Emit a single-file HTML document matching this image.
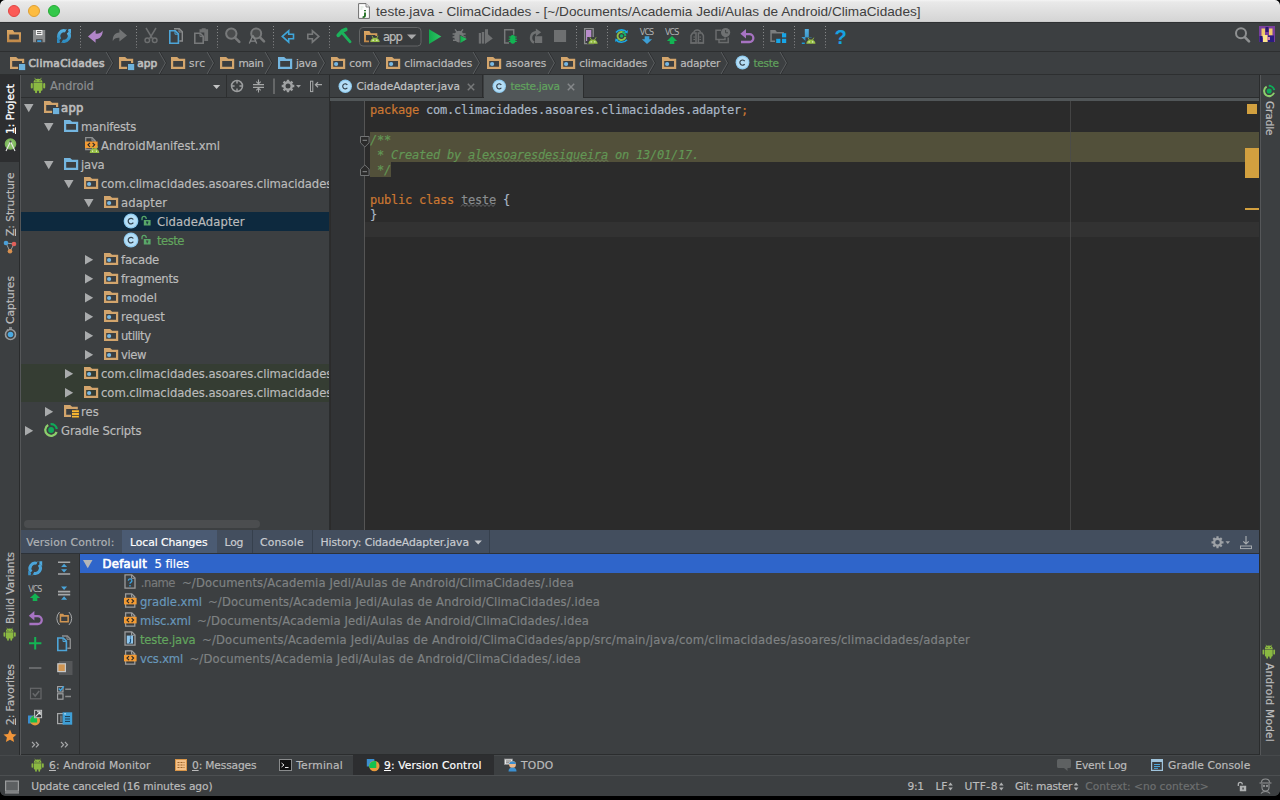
<!DOCTYPE html>
<html><head><meta charset="utf-8"><title>teste.java - ClimaCidades</title>
<style>
*{box-sizing:border-box;margin:0;padding:0}
html,body{width:1280px;height:800px;overflow:hidden;background:#000}
body{position:relative;font-family:"DejaVu Sans","Liberation Sans",sans-serif;font-size:11.6px;color:#bbb;-webkit-text-stroke:.18px}
.abs{position:absolute}
#win{position:absolute;left:0;top:0;width:1280px;height:796px;border-radius:5px 5px 6px 6px;background:#3c3f41;overflow:hidden}
#title{position:absolute;left:0;top:0;width:1280px;height:22px;background:linear-gradient(#f4f4f4 0,#e9e9e9 2px,#d5d5d5 21px,#c4c4c4 22px);border-radius:5px 5px 0 0}
#title .t{position:absolute;left:376px;top:3.800px;font-family:"Liberation Sans",sans-serif;font-size:13.600px;color:#404040;white-space:nowrap;letter-spacing:.02px;-webkit-text-stroke:0}
.tl{position:absolute;top:5px;width:12px;height:12px;border-radius:50%}
#toolbar{position:absolute;left:0;top:22px;width:1280px;height:30px;background:#3c3f41;border-bottom:1px solid #2d2f30;border-top:1px solid #2f3133}
#nav{position:absolute;left:0;top:52px;width:1280px;height:23px;background:#3c3f41;border-bottom:1px solid #2d2f30}
#lstrip{position:absolute;left:0;top:75px;width:21px;height:680px;background:#3c3f41}
#rstrip{position:absolute;left:1259px;top:75px;width:21px;height:680px;background:#3c3f41}
.vt{font-size:10.6px;line-height:15px;height:15px;transform-origin:0 0;transform:rotate(-90deg)}
.vtr{font-size:10.6px;line-height:15px;height:15px;transform-origin:0 0;transform:rotate(90deg)}
#proj{position:absolute;left:21px;top:75px;width:308px;height:455px;background:#3c3f41;overflow:hidden}
#projhead{position:absolute;left:0;top:0;width:308px;height:23px;border-bottom:1px solid #2d2f30}
.row{position:absolute;left:0;width:308px;height:19px;line-height:19px;white-space:nowrap}
.t{position:absolute;white-space:pre}
.row .t{line-height:19px}
#vdiv{position:absolute;left:329px;top:75px;width:1px;height:455px;background:#2b2d2e}
#editor{position:absolute;left:330px;top:75px;width:929px;height:455px;background:#2b2b2b;overflow:hidden}
#tabs{position:absolute;left:0;top:0;width:929px;height:23px;background:#3c3f41;border-bottom:1px solid #2b2d2e}
#tabline{position:absolute;left:0;top:23px;width:929px;height:3px;background:#515658}
#code{position:absolute;left:1px;top:26px;width:928px;height:429px;font-family:"DejaVu Sans Mono","Liberation Mono",monospace;font-size:12px;letter-spacing:-.224px;color:#a9b7c6}
.cl{position:absolute;left:38.900px;height:15px;line-height:15px;white-space:pre;margin-top:1.200px}
.kw{color:#cc7832}.dc{color:#629755;font-style:italic}
.wv{text-decoration:underline wavy #6a8759;text-decoration-thickness:1px;text-underline-offset:2px}
.un{color:#8a8d90}
#bottom{position:absolute;left:21px;top:530px;width:1238px;height:225px;background:#3c3f41}
#bhead{position:absolute;left:0;top:0;width:1238px;height:23px;background:#434e5e}
.bh{top:1.500px;line-height:22px;font-size:10.800px}
.br{line-height:19px}
.tw{top:0;line-height:20px;font-size:10.700px}
.st{top:1px;line-height:20px;font-size:10.700px}
#twbar{position:absolute;left:0;top:755px;width:1280px;height:20px;background:#3c3f41;border-top:1px solid #46494b}
#status{position:absolute;left:0;top:775px;width:1280px;height:21px;background:#3c3f41;border-top:1px solid #4c4f51;border-radius:0 0 5px 5px}
</style></head><body>
<svg width="0" height="0" style="position:absolute">
<defs>
<symbol id="i-folder" viewBox="0 0 16 16"><path fill-rule="evenodd" d="M0 2h6.100l2 1.750h6.100v10.350h-14.200z M2.200 6.100v5.650h9.800v-5.650z"/></symbol>
<symbol id="i-pkg" viewBox="0 0 16 16"><path fill="#d3a56c" fill-rule="evenodd" d="M0 2h6.100l2 1.750h6.100v10.350h-14.200z M2.200 6.100v5.650h9.800v-5.650z"/><circle cx="5.100" cy="9" r="2.100" fill="#78b8e2"/></symbol>
<symbol id="i-mod" viewBox="0 0 16 16"><path fill="#d3a56c" fill-rule="evenodd" d="M0 2h6.100l2 1.750h6.100v4.300h-2.200v-1.950h-9.800v5.650h5.900v2.350h-8.100z"/><rect x="9" y="9" width="6.200" height="6.100" fill="#6eb2dc"/></symbol>
<symbol id="i-res" viewBox="0 0 16 16"><path fill="#d3a56c" fill-rule="evenodd" d="M0 2h6.100l2 1.750h5.700v2.600h-2v-.250h-9.600v5.650h4.900v2.350h-7.100z"/><path fill="#f2a81d" d="M8 7.300h7v1.900h-7zM8 10h7v1.900h-7zM8 12.700h7v1.900h-7z"/><path stroke="#ffe27a" stroke-width=".7" stroke-dasharray="1.200 .9" d="M8.300 8.250h6.500M8.300 10.950h6.500M8.300 13.650h6.500"/></symbol>
<symbol id="i-class" viewBox="0 0 16 16"><circle cx="8" cy="8" r="7.400" fill="#8fcbef"/><circle cx="8" cy="8" r="6.200" fill="#b5def6"/><path d="M10.300 6.500a2.800 2.800 0 1 0 0 3.200" fill="none" stroke="#33424e" stroke-width="1.250"/></symbol>
<symbol id="i-lock" viewBox="0 0 16 16"><path d="M2 6.300v-1.800a2.100 2.100 0 0 1 4.200 0v.6" fill="none" stroke="#59a869" stroke-width="1.300"/><path fill="#59a869" fill-rule="evenodd" d="M3.800 6h6.800v5.600h-6.800z M6 7.500h2.400v1h-.7v1.800h-1v-1.800h-.7z"/></symbol>
<symbol id="i-arrd" viewBox="0 0 10 9"><path d="M0 0h9.5l-4.75 8.2z" fill="#a9abac"/></symbol>
<symbol id="i-arrr" viewBox="0 0 9 10"><path d="M0 0v9.5l8.2-4.75z" fill="#a9abac"/></symbol>
<symbol id="i-droid" viewBox="0 0 16 16" preserveAspectRatio="none"><g fill="#8bb942"><path d="M4 5.8h8v6.4a.8.8 0 0 1-.8.8h-6.4a.8.8 0 0 1-.8-.8z"/><path d="M4 5.2a4 3.6 0 0 1 8 0z"/><rect x="1.6" y="5.8" width="1.8" height="5.2" rx=".9"/><rect x="12.6" y="5.8" width="1.8" height="5.2" rx=".9"/><rect x="5.4" y="12" width="1.8" height="3.4" rx=".9"/><rect x="8.8" y="12" width="1.8" height="3.4" rx=".9"/><path d="M5 .8l1 1.6M11 .8l-1 1.6" stroke="#8bb942" stroke-width=".7"/></g><circle cx="6.2" cy="3.6" r=".55" fill="#3c3f41"/><circle cx="9.8" cy="3.6" r=".55" fill="#3c3f41"/></symbol>
<symbol id="i-droidhead" viewBox="0 0 12 8"><path d="M.7 7.700a5.300 4.900 0 0 1 10.600 0z" fill="#96bf45"/><path d="M2.700.700l1.500 2.600M9.300.700l-1.500 2.600" stroke="#96bf45" stroke-width="1" stroke-linecap="round"/><circle cx="3.900" cy="5.500" r=".7" fill="#fff"/><circle cx="8.100" cy="5.500" r=".7" fill="#fff"/></symbol>
<symbol id="i-xmlfile" viewBox="0 0 16 16"><path d="M1.7 1.7h6.5l3 3v8.8h-9.5z" fill="none" stroke="#8f9192" stroke-width="1.3"/><path d="M8 1.7v3.2h3.2" fill="none" stroke="#8f9192" stroke-width="1"/><rect x="1" y="5.5" width="12.6" height="6.6" fill="#f39b34"/><path d="M6 6.8l-2 2 2 2M8.6 6.8l2 2-2 2" fill="none" stroke="#2d2b28" stroke-width="1.2"/></symbol>
<symbol id="i-gradle" viewBox="0 0 16 16"><path d="M4.170 2.930A5.850 5.850 0 1 0 12.600 10" fill="none" stroke="#8ccf6c" stroke-width="2.300"/><path d="M6.590 2.170A5.850 5.850 0 0 1 12.860 6.980" fill="none" stroke="#0fa958" stroke-width="2.300"/><circle cx="7.100" cy="8" r="2.900" fill="#0fa958"/></symbol>
<symbol id="i-qfile" viewBox="0 0 12 15"><path d="M1 .8h6.800l3.200 3.200v10.200h-10z" fill="#3c3f41" stroke="#9a9c9d" stroke-width="1.300"/><path d="M7.500 1v3.300h3.300" fill="none" stroke="#9a9c9d" stroke-width="1"/><path d="M4.300 6.600a1.800 1.800 0 1 1 2.600 1.700c-.7.400-.9.800-.9 1.500M6 11v1.400" fill="none" stroke="#3ba3e0" stroke-width="1.300"/></symbol>
<symbol id="i-jfile" viewBox="0 0 12 15"><path d="M1 .8h6.800l3.200 3.200v10.200h-10z" fill="#3c3f41" stroke="#9a9c9d" stroke-width="1.300"/><path d="M7.500 1v3.300h3.300" fill="none" stroke="#9a9c9d" stroke-width="1"/><rect x="2.800" y="4.600" width="6.200" height="8" fill="#8fc7ee"/><path d="M6.500 5.600v1M6.500 7.600v3.200c0 .9-.5 1.200-1.500 1.200" fill="none" stroke="#1d4f7a" stroke-width="1.200"/></symbol>
<symbol id="i-xmlfile2" viewBox="0 0 13 15"><path d="M1.600.8h6.200l3 3v10.400h-9.200z" fill="none" stroke="#9a9c9d" stroke-width="1.300"/><path d="M7.500 1v3.200h3.200" fill="none" stroke="#9a9c9d" stroke-width="1"/><rect x="0" y="4.800" width="12.600" height="6.600" fill="#f39b34"/><path d="M5 6.100l-2 2 2 2M7.600 6.100l2 2-2 2" fill="none" stroke="#2d2b28" stroke-width="1.200"/></symbol>
</defs></svg>

<div id="win">
<div id="title">
 <div class="tl" style="left:8px;background:#fc5b57;border:.5px solid #df4744"></div>
 <div class="tl" style="left:28px;background:#fdbc40;border:.5px solid #de9f34"></div>
 <div class="tl" style="left:48px;background:#34c84a;border:.5px solid #27aa35"></div>
 <svg class="abs" style="left:358px;top:3px" width="12" height="16" viewBox="0 0 12 16"><path d="M.6.600h7.400l3.400 3.400v11.400h-10.800z" fill="#fdfdfd" stroke="#6e6e6e" stroke-width="1"/><path d="M8 .6v3.400h3.400" fill="#e4e4e4" stroke="#6e6e6e" stroke-width=".8"/><path d="M2.500 4h3M2.500 6h2" stroke="#c9d9c9" stroke-width=".8"/><path d="M7 7v1.300M7 9.400v3.200c0 1.100-.8 1.600-2.400 1.500" fill="none" stroke="#1a6a1a" stroke-width="1.800"/></svg>
 <div class="t">teste.java - ClimaCidades - [~/Documents/Academia Jedi/Aulas de Android/ClimaCidades]</div>
</div>
<div id="toolbar"><svg class="abs" style="left:0;top:-1px" width="1280" height="29" viewBox="0 22 1280 29" font-family="'DejaVu Sans',sans-serif">
<defs>
<linearGradient id="gOr" x1="0" y1="0" x2="0" y2="1"><stop offset="0" stop-color="#dba764"/><stop offset="1" stop-color="#c08848"/></linearGradient>
<linearGradient id="gBl" x1="0" y1="0" x2="0" y2="1"><stop offset="0" stop-color="#55b0e0"/><stop offset="1" stop-color="#2e8cc0"/></linearGradient>
<linearGradient id="gGr" x1="0" y1="0" x2="1" y2="0"><stop offset="0" stop-color="#13a84c"/><stop offset="1" stop-color="#2ec866"/></linearGradient>
<g id="sep"><path d="M0.5 26v22" stroke="#8e8f90" stroke-width="1" stroke-dasharray="1 2.05"/></g>
</defs>
<use href="#sep" x="80"/><use href="#sep" x="136"/><use href="#sep" x="217"/><use href="#sep" x="273"/><use href="#sep" x="329"/><use href="#sep" x="576"/><use href="#sep" x="607"/><use href="#sep" x="763"/><use href="#sep" x="794"/><use href="#sep" x="825"/>
<path fill="url(#gOr)" fill-rule="evenodd" d="M7 30h5.8l1.6 2.3h6.6v9.9h-14z M9.3 34.4v5.2h9.6v-5.2z"/>
<path fill="#8a8c8d" d="M33 30h12.2v12.2h-12.2z"/><rect x="36" y="30" width="6.4" height="5.1" fill="#fafafa"/><path d="M37 31.6h4.4M37 33.4h4.4" stroke="#444" stroke-width=".9"/><rect x="36.1" y="39.3" width="6.4" height="2.9" fill="#3c3f41"/><rect x="37.2" y="40.2" width="4.1" height="1.8" fill="#3f9edb"/>
<g fill="none" stroke="url(#gBl)" stroke-width="3.1"><path d="M65.81 31.02A5.3 5.3 0 0 0 60.06 39.55"/><path d="M62.19 40.98A5.3 5.3 0 0 0 67.94 32.45"/></g>
<path fill="#4fabde" d="M71 29h-5l5 5z"/><path fill="#2f8abf" d="M57 43h5l-5-5z"/>
<path d="M68 29.200l-8 13.600" stroke="#3c3f41" stroke-width="1.500"/>
<path fill="#b185c8" d="M88 36.4l7.6-6.4v3.6c3 .2 5.600-.4 7-3.200 .4 4.600-2.400 8.600-7 8.800v3.600z"/>
<path fill="#717374" d="M127 35.400l-7.600-6.400v3.600c-4.600 .2-7 3.600-6.600 8.600 1.400-3 3.600-3.600 6.600-3.400v3.800z"/>
<g fill="none" stroke="#6c6e6f" stroke-width="1.500"><path d="M146 28l6.400 10.500M156 28l-6.400 10.500"/><circle cx="147.300" cy="40.300" r="2.300"/><circle cx="154.700" cy="40.300" r="2.300"/></g>
<path d="M174 28.700h5.300l3 3v9.300h-3" fill="none" stroke="#8a8c8d" stroke-width="1.400"/><path d="M179 28.700v3.300h3.300" fill="none" stroke="#8a8c8d" stroke-width="1"/>
<path d="M169.800 30.700h5.400l3.200 3.200v9.300h-8.600z" fill="#3c3f41" stroke="#4da5d8" stroke-width="1.600"/><path d="M175 30.700v3.500h3.400" fill="none" stroke="#4da5d8" stroke-width="1"/>
<path fill="#6f7172" d="M199.500 29.300h2.200v-1.100h4v1.100h2.400v11.600h-3.800v-8.400h-4.800z"/>
<path d="M194.800 33.300h5.400l3 3v6.900h-8.400z" fill="#3c3f41" stroke="#77797a" stroke-width="1.600"/><path d="M200 33.300v3.300h3.200" fill="none" stroke="#77797a" stroke-width="1"/>
<circle cx="231.300" cy="33.600" r="5.200" fill="#4a4c4d" stroke="#77797a" stroke-width="2"/><path d="M235 37.600l4.300 4.300" stroke="#77797a" stroke-width="2.600" stroke-linecap="round"/>
<circle cx="256.200" cy="33.400" r="5" fill="#4a4c4d" stroke="#77797a" stroke-width="2"/><path d="M260 37.300l4 4" stroke="#77797a" stroke-width="2.600" stroke-linecap="round"/>
<path d="M249.300 43.600l3.300-7.800h.8l3.300 7.800M250.700 41.200h4.600" fill="none" stroke="#838586" stroke-width="1.300"/>
<path d="M282.300 36.400l6.400-5.600v3.400h4.800v4.500h-4.800v3.400z" fill="none" stroke="#3fa6da" stroke-width="1.600"/>
<path d="M318.800 36.400l-6.400-5.600v3.400h-4.600v4.500h4.600v3.400z" fill="none" stroke="#77797a" stroke-width="1.600"/>
<path d="M338.300 35.300l4-4.300 3.400-1.500" fill="none" stroke="#1cb25b" stroke-width="3.800" stroke-linecap="round" stroke-linejoin="round"/><path d="M342.500 33l7.600 8.800" stroke="#1cb25b" stroke-width="2.800" stroke-linecap="round"/>
<rect x="359.500" y="27.500" width="61.500" height="18.500" rx="3.500" fill="#383b3d" stroke="#636566"/>
<path fill="url(#gOr)" fill-rule="evenodd" d="M364 31h5.300l1.600 2.200h6.400v9h-13.300z M366 35v5.400h9.400v-5.400z"/>
<rect x="369" y="36" width="9" height="7" fill="#383b3d"/>
<svg x="369.400" y="35.300" width="11.200" height="7.200"><use href="#i-droidhead"/></svg>
<text x="383" y="41.400" font-size="11.600" fill="#bbbbbb" textLength="19.800" stroke="#bbbbbb" stroke-width=".2">app</text>
<path d="M407 34.400h9.400l-4.700 4.800z" fill="#a7a8a9"/>
<path d="M429 29.200l12.300 7.300-12.300 7.500z" fill="url(#gGr)"/>
<g fill="#77797a"><ellipse cx="459" cy="36.600" rx="4.800" ry="5.800"/><path d="M455.500 29l2 2.600h3l2-2.600 1 .7-1.800 2.600h-5.400l-1.800-2.600z"/><path d="M452.600 33.300h13v1.500h-13zM452.600 36.300h13v1.500h-13zM453 39.600h12v1.500h-12z"/></g>
<path d="M459.600 34.400l7.700 4.600-7.700 4.900z" fill="#3c3f41"/><path d="M460.300 35.400l6.500 3.700-6.500 4z" fill="url(#gGr)"/>
<g fill="#6f7172"><rect x="478.800" y="33" width="2.200" height="10.600"/><rect x="481.800" y="32" width="2.400" height="11.600"/><path d="M485 29.200h3v5l4.800 4.400-7.800 5.300z"/></g>
<path d="M509 43h-4.300v-13.300h9v5" fill="none" stroke="#77797a" stroke-width="1.500"/>
<g fill="#13b453"><ellipse cx="512.800" cy="39.400" rx="2.700" ry="4.400"/><path d="M508.800 36.400h8v1.100h-8zM508.600 38.700h8.400v1.100h-8.400zM508.800 41h8v1.100h-8z"/></g>
<path d="M534 42.600a5.500 5.500 0 0 1 1.600-10.300h1" fill="none" stroke="#6f7172" stroke-width="2.400"/><path d="M535.800 28.400l5.400 3.900-5.400 4z" fill="#6f7172"/><rect x="535" y="36.200" width="7.200" height="6.800" fill="#6f7172"/>
<rect x="554" y="30" width="12.100" height="12" fill="#6e7071"/>
<path d="M584.600 28.600h8.600v15h-8.600z" fill="#3c3f41" stroke="#8a8c8d" stroke-width="1.300"/><rect x="586" y="30" width="5.300" height="11" fill="#b98dcc"/>
<rect x="587.200" y="37" width="11.500" height="7" fill="#3c3f41"/><svg x="587.600" y="37" width="10.800" height="7"><use href="#i-droidhead"/></svg>
<g fill="none" stroke-width="1.600"><path d="M616 32.400a7.400 7.400 0 0 1 11-.2" stroke="#1aa7e6"/><path d="M627 39.700a7.400 7.400 0 0 1-11 .2" stroke="#1aa7e6"/><path d="M624.600 33.400a4 4 0 1 0 .8 3.600" stroke="#8cc04a" stroke-width="1.900"/><path d="M622.400 32.200a4 4 0 0 1 3 4" stroke="#13ae6a" stroke-width="1.900"/></g><circle cx="621.600" cy="36" r="1.700" fill="#13ae6a"/>
<path fill="#1aa7e6" d="M627.800 30l-.2 3.400-3-1zM615.200 42l.2-3.400 3 1z"/>
<text x="639.800" y="35" font-size="8" fill="#b4b6b7" textLength="14.400">VCS</text>
<path d="M644.700 36.300h4.600v3h2.800l-5.100 4.800-5.100-4.800h2.800z" fill="#3d9fd6"/>
<text x="665" y="35" font-size="8" fill="#b4b6b7" textLength="14.400">VCS</text>
<path d="M669.700 44h4.600v-3h2.800l-5.100-4.900-5.100 4.900h2.800z" fill="#13b453"/>
<g fill="none" stroke="#6a6c6d" stroke-width="1.500"><path d="M691 43v-7.500l1.600-2.500h3.400v10zM703.400 43v-7.500l-1.600-2.500h-3.400v10z"/><path d="M693.600 32.600a3.800 3.800 0 0 1 7.200 0" stroke-width="1.300"/><path d="M693.400 37h1.600M693.400 39.500h1.600M699.400 37h1.600M699.400 39.500h1.600" stroke-width="1.200"/></g><path d="M690.400 42.300h13.600v1.200h-13.600z" fill="#6a6c6d"/>
<g fill="none" stroke="#6a6c6d" stroke-width="1.500"><path d="M721 30.200h-5v9.400h9v-2M719 39.800v2.800h9.200v-5"/></g><circle cx="725.600" cy="32.600" r="4.600" fill="#6f7172"/><path d="M725.600 30v2.800h2.400" fill="none" stroke="#3c3f41" stroke-width=".9"/>
<path d="M741 42h8.400a3.900 3.900 0 0 0 0-7.900h-4.400" fill="none" stroke="#a773c2" stroke-width="2.300"/><path d="M746 29l-5.600 4.800 5.600 4.700z" fill="#a773c2"/>
<path fill="#7b7d7e" fill-rule="evenodd" d="M770.300 30h5l1.600 2h7v2h-1.500v-.5h-10.600v7h3.200v1.500h-4.700z"/>
<g fill="#17a6e8"><rect x="782" y="33.200" width="4.200" height="4.200"/><rect x="776.200" y="38.800" width="4.200" height="4.200"/><rect x="782" y="38.800" width="4.200" height="4.200"/></g>
<path d="M804.800 29h4v8h3.400l-5.400 5.200-5.400-5.200h3.400z" fill="url(#gBl)"/><rect x="801.800" y="42.600" width="3" height="1.300" fill="#17a6e8"/>
<rect x="805.400" y="37.400" width="11" height="7" fill="#3c3f41"/><svg x="805.600" y="37.200" width="10.600" height="6.900"><use href="#i-droidhead"/></svg>
<text x="834.600" y="43.800" font-size="20" font-weight="bold" fill="#17a2e2" font-family="'Liberation Sans',sans-serif">?</text>
<circle cx="1241" cy="33.200" r="5" fill="none" stroke="#8f9192" stroke-width="2"/><path d="M1244.800 37.200l4.200 4.200" stroke="#8f9192" stroke-width="2.600" stroke-linecap="round"/>
<rect x="1259" y="26" width="16" height="16" fill="#7a3f9e"/><rect x="1261.500" y="28.500" width="3.500" height="9" fill="#f0c96a"/><rect x="1269" y="28.500" width="3.500" height="7" fill="#f0c96a"/><rect x="1265.500" y="27" width="3" height="5" fill="#2a1a6a"/><rect x="1263" y="35" width="4.500" height="7" fill="#fbe58a"/><rect x="1259.500" y="36" width="3" height="6" fill="#231878"/><rect x="1268" y="35.500" width="6" height="6.500" fill="#2b1d80"/><rect x="1267" y="37" width="3" height="3" fill="#d98aa0"/>
</svg>
</div>
<div id="nav"><svg class="abs" style="left:10px;top:3px" width="16" height="16" ><use href="#i-mod"/></svg><span class="t" style="left:28.4px;top:0px;font-size:10.6px;-webkit-text-stroke:.7px;line-height:22px;height:22px;letter-spacing:0.332px;">ClimaCidades</span><svg class="abs" style="left:105.0px;top:0" width="9" height="22"><path d="M2.100 0l6.300 11-6.300 11" fill="none" stroke="#2f3133" stroke-width="1"/><path d="M1.100 0l6.300 11-6.300 11" fill="none" stroke="#5a5d5f" stroke-width="1"/></svg><svg class="abs" style="left:119px;top:3px" width="16" height="16" ><use href="#i-mod"/></svg><span class="t" style="left:137.2px;top:0px;font-size:10.6px;-webkit-text-stroke:.7px;line-height:22px;height:22px;letter-spacing:0.049px;">app</span><svg class="abs" style="left:157.5px;top:0" width="9" height="22"><path d="M2.100 0l6.300 11-6.300 11" fill="none" stroke="#2f3133" stroke-width="1"/><path d="M1.100 0l6.300 11-6.300 11" fill="none" stroke="#5a5d5f" stroke-width="1"/></svg><svg class="abs" style="left:171px;top:3px" width="16" height="16" fill="#d3a56c"><use href="#i-folder"/></svg><span class="t" style="left:189px;top:0px;font-size:10.6px;line-height:22px;height:22px;letter-spacing:0.310px;">src</span><svg class="abs" style="left:205.6px;top:0" width="9" height="22"><path d="M2.100 0l6.300 11-6.300 11" fill="none" stroke="#2f3133" stroke-width="1"/><path d="M1.100 0l6.300 11-6.300 11" fill="none" stroke="#5a5d5f" stroke-width="1"/></svg><svg class="abs" style="left:220px;top:3px" width="16" height="16" fill="#d3a56c"><use href="#i-folder"/></svg><span class="t" style="left:238.4px;top:0px;font-size:10.6px;line-height:22px;height:22px;letter-spacing:-0.396px;">main</span><svg class="abs" style="left:263.5px;top:0" width="9" height="22"><path d="M2.100 0l6.300 11-6.300 11" fill="none" stroke="#2f3133" stroke-width="1"/><path d="M1.100 0l6.300 11-6.300 11" fill="none" stroke="#5a5d5f" stroke-width="1"/></svg><svg class="abs" style="left:278px;top:3px" width="16" height="16" fill="#74b6e0"><use href="#i-folder"/></svg><span class="t" style="left:296px;top:0px;font-size:10.6px;line-height:22px;height:22px;letter-spacing:-0.326px;">java</span><svg class="abs" style="left:317.1px;top:0" width="9" height="22"><path d="M2.100 0l6.300 11-6.300 11" fill="none" stroke="#2f3133" stroke-width="1"/><path d="M1.100 0l6.300 11-6.300 11" fill="none" stroke="#5a5d5f" stroke-width="1"/></svg><svg class="abs" style="left:331.2px;top:3px" width="16" height="16" ><use href="#i-pkg"/></svg><span class="t" style="left:349.2px;top:0px;font-size:10.6px;line-height:22px;height:22px;letter-spacing:0.020px;">com</span><svg class="abs" style="left:372.1px;top:0" width="9" height="22"><path d="M2.100 0l6.300 11-6.300 11" fill="none" stroke="#2f3133" stroke-width="1"/><path d="M1.100 0l6.300 11-6.300 11" fill="none" stroke="#5a5d5f" stroke-width="1"/></svg><svg class="abs" style="left:386.2px;top:3px" width="16" height="16" ><use href="#i-pkg"/></svg><span class="t" style="left:404.2px;top:0px;font-size:10.6px;line-height:22px;height:22px;letter-spacing:-0.115px;">climacidades</span><svg class="abs" style="left:472.3px;top:0" width="9" height="22"><path d="M2.100 0l6.300 11-6.300 11" fill="none" stroke="#2f3133" stroke-width="1"/><path d="M1.100 0l6.300 11-6.300 11" fill="none" stroke="#5a5d5f" stroke-width="1"/></svg><svg class="abs" style="left:487px;top:3px" width="16" height="16" ><use href="#i-pkg"/></svg><span class="t" style="left:505.4px;top:0px;font-size:10.6px;line-height:22px;height:22px;letter-spacing:-0.037px;">asoares</span><svg class="abs" style="left:546.5px;top:0" width="9" height="22"><path d="M2.100 0l6.300 11-6.300 11" fill="none" stroke="#2f3133" stroke-width="1"/><path d="M1.100 0l6.300 11-6.300 11" fill="none" stroke="#5a5d5f" stroke-width="1"/></svg><svg class="abs" style="left:561px;top:3px" width="16" height="16" ><use href="#i-pkg"/></svg><span class="t" style="left:579.3px;top:0px;font-size:10.6px;line-height:22px;height:22px;letter-spacing:-0.115px;">climacidades</span><svg class="abs" style="left:647.4px;top:0" width="9" height="22"><path d="M2.100 0l6.300 11-6.300 11" fill="none" stroke="#2f3133" stroke-width="1"/><path d="M1.100 0l6.300 11-6.300 11" fill="none" stroke="#5a5d5f" stroke-width="1"/></svg><svg class="abs" style="left:662.1px;top:3px" width="16" height="16" ><use href="#i-pkg"/></svg><span class="t" style="left:680.2px;top:0px;font-size:10.6px;line-height:22px;height:22px;letter-spacing:-0.210px;">adapter</span><svg class="abs" style="left:720.4px;top:0" width="9" height="22"><path d="M2.100 0l6.300 11-6.300 11" fill="none" stroke="#2f3133" stroke-width="1"/><path d="M1.100 0l6.300 11-6.300 11" fill="none" stroke="#5a5d5f" stroke-width="1"/></svg><svg class="abs" style="left:734.6px;top:3px" width="15" height="15" ><use href="#i-class"/></svg><span class="t" style="left:753.4px;top:0px;font-size:10.6px;color:#62a55e;line-height:22px;height:22px;letter-spacing:-0.315px;">teste</span><svg class="abs" style="left:778.9px;top:0" width="9" height="22"><path d="M2.100 0l6.300 11-6.300 11" fill="none" stroke="#2f3133" stroke-width="1"/><path d="M1.100 0l6.300 11-6.300 11" fill="none" stroke="#5a5d5f" stroke-width="1"/></svg></div>
<div id="lstrip"><div class="abs" style="left:0;top:0;width:19px;height:87px;background:#2d2e30"></div>
<div class="abs" style="left:19px;top:0;width:1px;height:680px;background:#292b2c"></div>
<div class="abs" style="left:20px;top:0;width:1px;height:680px;background:#555759"></div>
<span class="t vt" style="left:3px;top:59px;color:#fff;-webkit-text-stroke:.3px;letter-spacing:0.008px"><u>1</u>: Project</span>
<svg class="abs" style="left:4px;top:62.500px" width="13" height="14" viewBox="0 0 13 14"><circle cx="6.500" cy="6" r="5.800" fill="#7cb85a"/><circle cx="6.500" cy="6" r="4" fill="#9acb7a" opacity=".5"/><path d="M6.500 3.500l-4.500 9.500M6.500 3.500l4.500 9.500" fill="none" stroke="#e8e8e8" stroke-width="1.100"/><circle cx="6.500" cy="3.600" r="1.100" fill="#4a4d4f"/></svg>
<span class="t vt" style="left:3px;top:161px;letter-spacing:0.001px;-webkit-text-stroke:.2px"><u>Z</u>: Structure</span>
<svg class="abs" style="left:3px;top:165px" width="14" height="14" viewBox="0 0 14 14"><path d="M3 3l8 1M3 3l4 8.500M11 4l-4 7.500" stroke="#9a9c9d" stroke-width="1"/><circle cx="3" cy="3" r="2.300" fill="#4a9fd8"/><circle cx="11" cy="4" r="2.300" fill="#e0605a"/><circle cx="7" cy="11.300" r="2.300" fill="#d89050"/></svg>
<span class="t vt" style="left:3px;top:249px;letter-spacing:0.043px;-webkit-text-stroke:.2px">Captures</span>
<svg class="abs" style="left:3.500px;top:251.500px" width="13" height="14" viewBox="0 0 13 14"><circle cx="6.500" cy="7.500" r="5" fill="none" stroke="#9a9c9d" stroke-width="1.600"/><circle cx="6.500" cy="7.500" r="2.800" fill="#4aa8e0"/><path d="M5 1h3M3 2.500l1.500 1.500" stroke="#9a9c9d" stroke-width="1.300"/></svg>
<span class="t vt" style="left:3px;top:549px;letter-spacing:-0.076px;-webkit-text-stroke:.2px">Build Variants</span>
<svg class="abs" style="left:2.400px;top:552.300px" width="15.250" height="14.250"><use href="#i-droid"/></svg>
<span class="t vt" style="left:3px;top:650px;letter-spacing:-0.044px;-webkit-text-stroke:.2px"><u>2</u>: Favorites</span>
<svg class="abs" style="left:3px;top:654px" width="14" height="14" viewBox="0 0 14 14"><path d="M7 .6l1.950 4.300 4.600.5-3.450 3.100 1 4.600-4.100-2.400-4.100 2.400 1-4.600-3.450-3.100 4.600-.5z" fill="#f0953a"/></svg>
</div>
<div id="rstrip"><div class="abs" style="left:0;top:0;width:1px;height:680px;background:#2a2c2d"></div><div class="abs" style="left:1px;top:0;width:1px;height:680px;background:#555759"></div>
<svg class="abs" style="left:3.500px;top:8.500px" width="14" height="14"><use href="#i-gradle"/></svg>
<span class="t vtr" style="left:17.800px;top:26px;letter-spacing:-0.125px;-webkit-text-stroke:.2px">Gradle</span>
<svg class="abs" style="left:1.900px;top:569.200px" width="15.600" height="15.300"><use href="#i-droid"/></svg>
<span class="t vtr" style="left:17.800px;top:587.500px;letter-spacing:0.220px;-webkit-text-stroke:.2px">Android Model</span>
</div>
<div id="proj"><div id="projhead"><svg class="abs" style="left:8.100px;top:1.900px" width="18" height="16.800"><use href="#i-droid"/></svg>
<span class="t" style="left:29px;top:0;line-height:22px;color:#8c8f91;-webkit-text-stroke:.15px;letter-spacing:-0.161px">Android</span>
<svg class="abs" style="left:0;top:0" width="308" height="22" viewBox="21 75 308 22">
<path d="M213 85h7.200l-3.600 3.900z" fill="#c3c4c4"/>
<path d="M226.500 75v22" stroke="#2d2f30"/>
<g fill="none" stroke="#9b9d9e" stroke-width="1.500"><circle cx="237" cy="86" r="5.500"/><path d="M237 80v3.600M237 88.400v3.600M231 86h3.600M239.400 86h3.600"/></g>
<g fill="none" stroke="#a6a8a9" stroke-width="1.100"><path d="M253 84.600h11M253 87.400h11M258.500 79.500v4M258.500 88.500v4"/><path d="M256.300 81.600l2.200 2.200 2.200-2.200M256.300 90.400l2.200-2.200 2.200 2.200"/></g>
<path d="M274 78.500v15.500" stroke="#77797a" stroke-width="1.400"/>
<g transform="translate(288 86)"><circle r="3.700" fill="none" stroke="#a0a2a3" stroke-width="2.400"/><g stroke="#a0a2a3" stroke-width="2.400"><path d="M0-6.300v2.400M0 6.300v-2.400M-6.300 0h2.400M6.300 0h-2.400M-4.450-4.450l1.700 1.700M4.450 4.450l-1.700-1.700M-4.450 4.450l1.700-1.700M4.450-4.450l-1.700 1.700"/></g></g>
<path d="M296 85h5l-2.500 2.800z" fill="#a0a2a3"/>
<rect x="310.500" y="81.200" width="2.300" height="10.400" fill="none" stroke="#a6a8a9" stroke-width="1"/><path d="M315.500 84.700h6.500M318 82.200l-2.600 2.500 2.600 2.500" fill="none" stroke="#a6a8a9" stroke-width="1.200"/>
</svg>
</div>
<div class="row" style="top:23px;"><svg class="abs" style="left:3px;top:6px" width="10" height="9" ><use href="#i-arrd"/></svg><svg class="abs" style="left:23px;top:1px" width="16" height="16" ><use href="#i-mod"/></svg><span class="t" style="left:40px;top:0.9px;-webkit-text-stroke:.7px;letter-spacing:0.324px;">app</span></div>
<div class="row" style="top:42px;"><svg class="abs" style="left:23px;top:6px" width="10" height="9" ><use href="#i-arrd"/></svg><svg class="abs" style="left:43px;top:1px" width="16" height="16" fill="#74b6e0"><use href="#i-folder"/></svg><span class="t" style="left:60px;top:0.9px;letter-spacing:-0.201px;">manifests</span></div>
<div class="row" style="top:61px;"><svg class="abs" style="left:63px;top:0.3px" width="16" height="16" ><use href="#i-xmlfile"/></svg><svg class="abs" style="left:67.5px;top:10.3px" width="11" height="7.3" ><use href="#i-droidhead"/></svg><span class="t" style="left:80px;top:0.9px;letter-spacing:-0.020px;">AndroidManifest.xml</span></div>
<div class="row" style="top:80px;"><svg class="abs" style="left:23px;top:6px" width="10" height="9" ><use href="#i-arrd"/></svg><svg class="abs" style="left:43px;top:1px" width="16" height="16" fill="#74b6e0"><use href="#i-folder"/></svg><span class="t" style="left:60px;top:0.9px;letter-spacing:-0.199px;">java</span></div>
<div class="row" style="top:99px;"><svg class="abs" style="left:43px;top:6px" width="10" height="9" ><use href="#i-arrd"/></svg><svg class="abs" style="left:63px;top:1px" width="16" height="16" ><use href="#i-pkg"/></svg><span class="t" style="left:80px;top:0.9px;letter-spacing:-0.032px;">com.climacidades.asoares.climacidades</span></div>
<div class="row" style="top:118px;"><svg class="abs" style="left:63px;top:6px" width="10" height="9" ><use href="#i-arrd"/></svg><svg class="abs" style="left:83px;top:1px" width="16" height="16" ><use href="#i-pkg"/></svg><span class="t" style="left:100px;top:0.9px;letter-spacing:0.089px;">adapter</span></div>
<div class="row" style="top:137px;background:#0d293e;"><svg class="abs" style="left:102px;top:1px" width="16" height="16" ><use href="#i-class"/></svg><svg class="abs" style="left:119px;top:2px" width="16" height="16" ><use href="#i-lock"/></svg><span class="t" style="left:136px;top:0.9px;letter-spacing:0.109px;">CidadeAdapter</span></div>
<div class="row" style="top:156px;"><svg class="abs" style="left:102px;top:1px" width="16" height="16" ><use href="#i-class"/></svg><svg class="abs" style="left:119px;top:2px" width="16" height="16" ><use href="#i-lock"/></svg><span class="t" style="left:136px;top:0.9px;color:#62a55e;letter-spacing:-0.481px;">teste</span></div>
<div class="row" style="top:175px;"><svg class="abs" style="left:64px;top:5px" width="9" height="10" ><use href="#i-arrr"/></svg><svg class="abs" style="left:83px;top:1px" width="16" height="16" ><use href="#i-pkg"/></svg><span class="t" style="left:100px;top:0.9px;letter-spacing:-0.195px;">facade</span></div>
<div class="row" style="top:194px;"><svg class="abs" style="left:64px;top:5px" width="9" height="10" ><use href="#i-arrr"/></svg><svg class="abs" style="left:83px;top:1px" width="16" height="16" ><use href="#i-pkg"/></svg><span class="t" style="left:100px;top:0.9px;letter-spacing:-0.232px;">fragments</span></div>
<div class="row" style="top:213px;"><svg class="abs" style="left:64px;top:5px" width="9" height="10" ><use href="#i-arrr"/></svg><svg class="abs" style="left:83px;top:1px" width="16" height="16" ><use href="#i-pkg"/></svg><span class="t" style="left:100px;top:0.9px;letter-spacing:-0.042px;">model</span></div>
<div class="row" style="top:232px;"><svg class="abs" style="left:64px;top:5px" width="9" height="10" ><use href="#i-arrr"/></svg><svg class="abs" style="left:83px;top:1px" width="16" height="16" ><use href="#i-pkg"/></svg><span class="t" style="left:100px;top:0.9px;letter-spacing:-0.040px;">request</span></div>
<div class="row" style="top:251px;"><svg class="abs" style="left:64px;top:5px" width="9" height="10" ><use href="#i-arrr"/></svg><svg class="abs" style="left:83px;top:1px" width="16" height="16" ><use href="#i-pkg"/></svg><span class="t" style="left:100px;top:0.9px;letter-spacing:-0.496px;">utility</span></div>
<div class="row" style="top:270px;"><svg class="abs" style="left:64px;top:5px" width="9" height="10" ><use href="#i-arrr"/></svg><svg class="abs" style="left:83px;top:1px" width="16" height="16" ><use href="#i-pkg"/></svg><span class="t" style="left:100px;top:0.9px;letter-spacing:-0.426px;">view</span></div>
<div class="row" style="top:289px;background:#353d33;"><svg class="abs" style="left:44px;top:5px" width="9" height="10" ><use href="#i-arrr"/></svg><svg class="abs" style="left:63px;top:1px" width="16" height="16" ><use href="#i-pkg"/></svg><span class="t" style="left:80px;top:0.9px;letter-spacing:-0.032px;">com.climacidades.asoares.climacidades</span></div>
<div class="row" style="top:308px;background:#353d33;"><svg class="abs" style="left:44px;top:5px" width="9" height="10" ><use href="#i-arrr"/></svg><svg class="abs" style="left:63px;top:1px" width="16" height="16" ><use href="#i-pkg"/></svg><span class="t" style="left:80px;top:0.9px;letter-spacing:-0.032px;">com.climacidades.asoares.climacidades</span></div>
<div class="row" style="top:327px;"><svg class="abs" style="left:24px;top:5px" width="9" height="10" ><use href="#i-arrr"/></svg><svg class="abs" style="left:43px;top:1px" width="16" height="16" ><use href="#i-res"/></svg><span class="t" style="left:60px;top:0.9px;letter-spacing:0.038px;">res</span></div>
<div class="row" style="top:346px;"><svg class="abs" style="left:4px;top:5px" width="9" height="10" ><use href="#i-arrr"/></svg><svg class="abs" style="left:23px;top:1px" width="16" height="16" ><use href="#i-gradle"/></svg><span class="t" style="left:40px;top:0.9px;letter-spacing:-0.102px;">Gradle Scripts</span></div>
<div class="abs" style="left:2.500px;top:445px;width:236px;height:8px;border-radius:4px;background:#4b4d4f"></div></div>
<div id="vdiv"></div>
<div id="editor"><div id="tabs"><div class="abs" style="left:0;top:0;width:153px;height:22px;border-right:1px solid #2b2d2e"></div>
<div class="abs" style="left:154px;top:0;width:99px;height:23px;background:#515658"></div>
<div class="abs" style="left:253px;top:0;width:1px;height:22px;background:#2b2d2e"></div>
<svg class="abs" style="left:8px;top:4px" width="14.500" height="14.500"><use href="#i-class"/></svg>
<span class="t" style="left:26.400px;top:0;font-size:10.600px;line-height:22px;color:#c4c6c7;letter-spacing:0.010px">CidadeAdapter.java</span>
<svg class="abs" style="left:137px;top:8px" width="8" height="8" viewBox="0 0 8 8"><path d="M.8.800l6.400 6.400M7.200.800l-6.400 6.400" stroke="#77797a" stroke-width="1.500"/></svg>
<svg class="abs" style="left:162px;top:4px" width="14.500" height="14.500"><use href="#i-class"/></svg>
<span class="t" style="left:180.400px;top:0;font-size:10.600px;line-height:22px;color:#62a55e;letter-spacing:-0.304px">teste.java</span>
<svg class="abs" style="left:237px;top:8px" width="8" height="8" viewBox="0 0 8 8"><path d="M.8.800l6.400 6.400M7.200.800l-6.400 6.400" stroke="#85888a" stroke-width="1.500"/></svg>
</div><div id="tabline"></div><div id="code"><div class="abs" style="left:0;top:0;width:33px;height:429px;background:#313335"></div>
<div class="abs" style="left:33px;top:0;width:1px;height:429px;background:#555555"></div>
<div class="abs" style="left:39px;top:31px;width:889px;height:30px;background:#52503a"></div>
<div class="abs" style="left:39px;top:61px;width:21px;height:15px;background:#52503a"></div>
<div class="abs" style="left:34px;top:121px;width:894px;height:15px;background:#323232"></div>
<div class="abs" style="left:739px;top:0;width:1px;height:429px;background:#4b4b4b;opacity:.8"></div>
<div class="cl" style="top:1px"><span class="kw">package </span>com.climacidades.asoares.climacidades.adapter<span class="kw">;</span></div>
<div class="cl dc" style="top:31px">/**</div>
<div class="cl dc" style="top:46px"> * Created by alexsoaresdesiqueira on 13/01/17.</div>
<div class="cl dc" style="top:61px"> */</div>
<div class="cl" style="top:91px"><span class="kw">public class </span><span class="un">teste</span> {</div>
<div class="cl" style="top:106px">}</div>
<svg class="abs" style="left:28.600px;top:35px" width="11" height="12" viewBox="0 0 11 12"><path d="M.5.500h8.600v6.300l-4.300 4.200-4.300-4.200z" fill="#2b2b2b" stroke="#727475"/><path d="M2.600 4.300h4.400" stroke="#8a8c8d"/></svg>
<svg class="abs" style="left:28.600px;top:62.500px" width="11" height="12" viewBox="0 0 11 12"><path d="M.5 11.500h8.600v-6.300l-4.300-4.200-4.300 4.200z" fill="#2b2b2b" stroke="#727475"/><path d="M2.600 7.700h4.400" stroke="#8a8c8d"/></svg>
<div class="abs" style="left:916px;top:3px;width:10px;height:10px;background:#d2a03f"></div>
<div class="abs" style="left:914px;top:47px;width:14px;height:30px;background:#d2a03f"></div>
<div class="abs" style="left:914px;top:106.500px;width:14px;height:2.500px;background:#d2a03f"></div>
<svg class="abs" style="left:0;top:0" width="928" height="140" viewBox="0 0 928 140"><path d="M137 60.6L139 58.6L141 60.6L143 58.6L145 60.6L147 58.6L149 60.6L151 58.6L153 60.6L155 58.6L157 60.6L159 58.6L161 60.6L163 58.6L165 60.6L167 58.6L169 60.6L171 58.6L173 60.6L175 58.6L177 60.6L179 58.6L181 60.6L183 58.6L185 60.6L187 58.6L189 60.6L191 58.6L193 60.6L195 58.6L197 60.6L199 58.6L201 60.6L203 58.6L205 60.6L207 58.6L209 60.6L211 58.6L213 60.6L215 58.6L217 60.6L219 58.6L221 60.6L223 58.6L225 60.6L227 58.6L229 60.6L231 58.6L233 60.6L235 58.6L237 60.6L239 58.6L241 60.6L243 58.6L245 60.6L247 58.6L249 60.6L251 58.6L253 60.6L255 58.6L257 60.6L259 58.6L261 60.6L263 58.6L265 60.6L267 58.6L269 60.6L271 58.6L273 60.6L275 58.6L277 60.6" fill="none" stroke="#6f8f5c" stroke-width=".9"/><path d="M130 105.5L132 103.3L134 105.5L136 103.3L138 105.5L140 103.3L142 105.5L144 103.3L146 105.5L148 103.3L150 105.5L152 103.3L154 105.5L156 103.3L158 105.5L160 103.3L162 105.5L164 103.3" fill="none" stroke="#6a6c6e" stroke-width=".9"/></svg>
</div></div>
<div id="bottom"><div id="bhead"></div><div class="abs" style="left:0;top:224px;width:1238px;height:1px;background:#2b2d2e"></div>
<div class="abs" style="left:101px;top:0;width:94.500px;height:23px;background:#4b5b73"></div>
<div class="abs" style="left:231px;top:0;width:1px;height:23px;background:#36404d"></div>
<div class="abs" style="left:291px;top:0;width:1px;height:23px;background:#36404d"></div>
<div class="abs" style="left:468px;top:0;width:1px;height:23px;background:#36404d"></div>
<span class="t bh" style="left:5.200px;color:#b0b3b6;letter-spacing:0.155px">Version Control:</span>
<span class="t bh" style="left:109px;color:#fff;letter-spacing:-0.069px">Local Changes</span>
<span class="t bh" style="left:203.500px;color:#c9ccd0;letter-spacing:-0.199px">Log</span>
<span class="t bh" style="left:239px;color:#c9ccd0;letter-spacing:0.118px">Console</span>
<span class="t bh" style="left:299.500px;color:#c9ccd0;letter-spacing:-0.060px">History: CidadeAdapter.java</span>
<svg class="abs" style="left:0;top:1px" width="1238" height="22" viewBox="21 531 1238 22">
<path d="M474.500 540.500h7.400l-3.700 4z" fill="#c3c6ca"/>
<g transform="translate(1217.500 542.300)"><circle r="3.400" fill="none" stroke="#9da1a6" stroke-width="2.200"/><g stroke="#9da1a6" stroke-width="2.200"><path d="M0-6v2.400M0 6v-2.400M-6 0h2.400M6 0h-2.400M-4.200-4.200l1.700 1.700M4.200 4.200l-1.700-1.700M-4.200 4.200l1.700-1.700M4.200-4.200l-1.700 1.700"/></g></g>
<path d="M1225.500 541.300h4.600l-2.300 2.600z" fill="#9da1a6"/>
<path d="M1246 536v7.500M1243.300 541.300l2.700 2.700 2.700-2.700" fill="none" stroke="#a6aaae" stroke-width="1.200"/><rect x="1240.500" y="546" width="11" height="2.600" fill="none" stroke="#a6aaae" stroke-width="1"/>
</svg>
<div class="abs" style="left:0;top:23px;width:1238px;height:1px;background:#2d3238"></div><div class="abs" style="left:58px;top:24px;width:1px;height:200px;background:#2d2f30"></div>
<svg class="abs" style="left:0;top:23px" width="59" height="201" viewBox="21 553 59 201" font-family="'DejaVu Sans',sans-serif">
<g fill="none" stroke="#4aa4d9" stroke-width="3"><path d="M36.98 563.31A5.2 5.2 0 0 0 31.34 571.68"/><path d="M33.42 573.09A5.2 5.2 0 0 0 39.06 564.72"/></g>
<path fill="#4fabde" d="M42.200 561.200h-5l5 5z"/><path fill="#3b93c9" d="M28.200 575.200h5l-5-5z"/>
<path d="M39.200 561.400l-8 13.600" stroke="#3c3f41" stroke-width="1.500"/>
<path d="M58 562.300h12.200M58 574h12.200" stroke="#a6a8a9" stroke-width="1.600"/><path d="M64.100 563.700l3 3.400h-6zM64.100 572.600l3-3.400h-6z" fill="#4aa4d9"/>
<text x="28.300" y="592" font-size="8" fill="#b4b6b7" textLength="14">VCS</text>
<path d="M32.700 601h4.600v-3h2.800l-5.100-4.700-5.100 4.700h2.800z" fill="#13b453"/>
<path d="M58 591.600h12.200M58 594.600h12.200" stroke="#a6a8a9" stroke-width="1.600"/><path d="M64.100 590l3-3.600h-6zM64.100 596.200l3 3.600h-6z" fill="#4aa4d9"/>
<path d="M29.400 624h8.400a3.900 3.900 0 0 0 0-7.900h-4.400" fill="none" stroke="#a773c2" stroke-width="2.300"/><path d="M34.400 611l-5.600 4.800 5.600 4.700z" fill="#a773c2"/>
<path d="M59.600 612a9 9 0 0 0 0 13M68.900 612a9 9 0 0 1 0 13" fill="none" stroke="#a6a8a9" stroke-width="1"/>
<path fill="#d09552" fill-rule="evenodd" d="M59.700 613.800h3.400l1 1.300h4.800v7.400h-9.200z M61.200 616.800v4.200h6.200v-4.200z"/>
<path d="M29 643.200h12.400M35.200 637v12.400" stroke="#13b453" stroke-width="2"/>
<path d="M62 636h5.300l3 3v9.300h-3" fill="none" stroke="#8a8c8d" stroke-width="1.400"/><path d="M67 636v3.300h3.300" fill="none" stroke="#8a8c8d" stroke-width="1"/>
<path d="M57.800 638h5.400l3.200 3.200v9.300h-8.600z" fill="#3c3f41" stroke="#4da5d8" stroke-width="1.600"/><path d="M63 638v3.500h3.400" fill="none" stroke="#4da5d8" stroke-width="1"/>
<path d="M29 668h12.400" stroke="#66686a" stroke-width="2"/>
<rect x="59" y="661" width="13.500" height="14" fill="#6a6c6d" opacity=".55"/>
<rect x="57.800" y="663.800" width="7.600" height="7.800" fill="#d09552" stroke="#c6c8c9" stroke-width="1.200"/>
<rect x="30.500" y="688.300" width="10.500" height="10.500" fill="none" stroke="#66686a" stroke-width="1.200"/><path d="M32.800 693.300l2.400 2.800 4-5" fill="none" stroke="#66686a" stroke-width="1.600"/>
<rect x="57.600" y="686.600" width="5.400" height="5.400" fill="none" stroke="#a6a8a9" stroke-width="1.100"/><rect x="57.600" y="693.800" width="5.400" height="5.400" fill="none" stroke="#a6a8a9" stroke-width="1.100"/>
<path d="M65.200 689.300h5.800M65.200 696.500h5.800" stroke="#8a8c8d" stroke-width="1.600"/><path d="M58.800 688.400l1.800 2 3.200-4" fill="none" stroke="#3ba3e0" stroke-width="1.500"/>
<rect x="28" y="715.500" width="8" height="8" fill="#3b8fd0"/><circle cx="35" cy="720.500" r="5" fill="#e89a3c"/><path d="M30.600 722.500a5 5 0 0 1 6.500-6.500v6.500z" fill="#13c04f"/>
<rect x="34.600" y="710.300" width="7" height="7.400" fill="#3c3f41" stroke="#bfc1c2" stroke-width="1"/><path d="M35.500 716.600l4.600-4.600M37 711.800h3.200v3.200" fill="none" stroke="#e2e3e4" stroke-width="1.100"/>
<rect x="57.600" y="713.600" width="6" height="10" fill="none" stroke="#a6a8a9" stroke-width="1.200"/><rect x="60" y="715.500" width="2.500" height="6.500" fill="#6a6c6d"/>
<rect x="62.600" y="712.300" width="9.600" height="12.400" fill="#3f9fd6"/><path d="M65 716.600h5M65 719h5M65 721.400h5" stroke="#1e3a4e" stroke-width="1"/><rect x="64.400" y="713.200" width="1.300" height="1.300" fill="#e8f4fb"/>
<g fill="none" stroke="#a6a8a9" stroke-width="1.200"><path d="M32 742l2.600 2.700-2.600 2.700M35.900 742l2.600 2.700-2.600 2.700"/><path d="M61 742l2.600 2.700-2.600 2.700M64.900 742l2.600 2.700-2.600 2.700"/></g>
</svg>
<div class="abs" style="left:59px;top:24px;width:1179px;height:19px;background:#2f65ca"></div>
<svg class="abs" style="left:62px;top:29.500px" width="10" height="9"><path d="M0 0h9.500l-4.750 8.200z" fill="#b4b6b8"/></svg>
<span class="t br" style="left:81.500px;top:25px;color:#fff;-webkit-text-stroke:.7px;letter-spacing:0.304px">Default</span>
<span class="t br" style="left:133.500px;top:25px;color:#fff;letter-spacing:-0.038px">5 files</span>
<div class="abs" style="left:0;top:43px;width:1238px;height:19px"><svg class="abs" style="left:103px;top:0.7px" width="12" height="15" ><use href="#i-qfile"/></svg><span class="t br" style="left:119.80000000000001px;top:1px;color:#787a7b;letter-spacing:-0.476px;">.name</span><span class="t br" style="left:161px;top:1px;color:#7f8283;letter-spacing:0.138px;">~/Documents/Academia Jedi/Aulas de Android/ClimaCidades/.idea</span></div>
<div class="abs" style="left:0;top:62px;width:1238px;height:19px"><svg class="abs" style="left:103px;top:0.7px" width="13" height="15" ><use href="#i-xmlfile2"/></svg><span class="t br" style="left:119px;top:1px;color:#6897bb;letter-spacing:-0.002px;">gradle.xml</span><span class="t br" style="left:187px;top:1px;color:#7f8283;letter-spacing:0.138px;">~/Documents/Academia Jedi/Aulas de Android/ClimaCidades/.idea</span></div>
<div class="abs" style="left:0;top:81px;width:1238px;height:19px"><svg class="abs" style="left:103px;top:0.7px" width="13" height="15" ><use href="#i-xmlfile2"/></svg><span class="t br" style="left:119px;top:1px;color:#6897bb;letter-spacing:-0.150px;">misc.xml</span><span class="t br" style="left:176px;top:1px;color:#7f8283;letter-spacing:0.138px;">~/Documents/Academia Jedi/Aulas de Android/ClimaCidades/.idea</span></div>
<div class="abs" style="left:0;top:100px;width:1238px;height:19px"><svg class="abs" style="left:103px;top:0.7px" width="12" height="15" ><use href="#i-jfile"/></svg><span class="t br" style="left:119px;top:1px;color:#62a55e;letter-spacing:-0.188px;">teste.java</span><span class="t br" style="left:181px;top:1px;color:#7f8283;letter-spacing:0.192px;">~/Documents/Academia Jedi/Aulas de Android/ClimaCidades/app/src/main/java/com/climacidades/asoares/climacidades/adapter</span></div>
<div class="abs" style="left:0;top:119px;width:1238px;height:19px"><svg class="abs" style="left:103px;top:0.7px" width="13" height="15" ><use href="#i-xmlfile2"/></svg><span class="t br" style="left:119px;top:1px;color:#6897bb;letter-spacing:-0.192px;">vcs.xml</span><span class="t br" style="left:168.5px;top:1px;color:#7f8283;letter-spacing:0.130px;">~/Documents/Academia Jedi/Aulas de Android/ClimaCidades/.idea</span></div>

</div>
<div id="twbar"><div class="abs" style="left:353px;top:-1px;width:141px;height:20px;background:#2d2e30"></div>
<svg class="abs" style="left:30.400px;top:2.200px" width="15.250" height="14.250"><use href="#i-droid"/></svg>
<span class="t tw" style="left:49px;letter-spacing:0.130px"><u>6</u>: Android Monitor</span>
<svg class="abs" style="left:175px;top:3.0px" width="12" height="12" viewBox="0 0 12 12"><rect x=".5" y=".5" width="11" height="11" fill="#f3c088" stroke="#d89548"/><path d="M2.500 3.500h7M2.500 6h7M2.500 8.500h7" stroke="#9a6228" stroke-width="1" stroke-dasharray="2 1"/></svg>
<span class="t tw" style="left:192px;letter-spacing:-0.174px"><u>0</u>: Messages</span>
<svg class="abs" style="left:279px;top:3.0px" width="13" height="12" viewBox="0 0 13 12"><rect x=".5" y=".5" width="12" height="11" fill="#111" stroke="#8a8c8d"/><path d="M2.500 4l2.500 2-2.500 2M6 8.500h3.500" fill="none" stroke="#e6e6e6" stroke-width="1"/></svg>
<span class="t tw" style="left:296.200px;letter-spacing:0.204px">Terminal</span>
<svg class="abs" style="left:366px;top:2.0px" width="15" height="14" viewBox="0 0 15 14"><rect x=".8" y="1" width="7.500" height="7.500" fill="#3b8fd0"/><circle cx="8.300" cy="8" r="5.200" fill="#e89a3c"/><path d="M3.600 10a5.200 5.200 0 0 1 6.700-6.700v6.700z" fill="#13c04f"/></svg>
<span class="t tw" style="left:384px;color:#fff;letter-spacing:0.131px"><u>9</u>: Version Control</span>
<svg class="abs" style="left:504px;top:2.0px" width="14" height="14" viewBox="0 0 14 14"><rect x=".5" y="1" width="8" height="5.500" fill="#e6e6e6" stroke="#8a8c8d" stroke-width=".8"/><path d="M2 3h5M2 4.800h3" stroke="#555" stroke-width=".8"/><circle cx="8.500" cy="6.500" r="3.400" fill="#f0b98a"/><path d="M5 6a3.600 3.600 0 0 1 7 0z" fill="#3b8fd0"/><path d="M4.500 13.500a4 4 0 0 1 8 0z" fill="#3b8fd0"/></svg>
<span class="t tw" style="left:521px;letter-spacing:0.227px">TODO</span>
<svg class="abs" style="left:1056.500px;top:3.3px" width="14" height="12" viewBox="0 0 14 12"><path d="M1.500 0h11a1.500 1.500 0 0 1 1.500 1.500v6a1.500 1.500 0 0 1-1.500 1.500h-2v3l-3.500-3h-5.500a1.500 1.500 0 0 1-1.500-1.500v-6a1.500 1.500 0 0 1 1.500-1.500z" fill="#5e6162"/></svg>
<span class="t tw" style="left:1075.300px;letter-spacing:-0.168px">Event Log</span>
<svg class="abs" style="left:1151px;top:3.0px" width="12" height="12" viewBox="0 0 12 12"><rect x=".6" y=".6" width="10.800" height="10.800" fill="#3c3f41" stroke="#9fc4dc" stroke-width="1.200"/><rect x="1" y="1" width="10" height="2" fill="#9fc4dc"/><path d="M3 5.500h6M3 7.500h6M3 9.400h4" stroke="#4da5d8" stroke-width="1"/></svg>
<span class="t tw" style="left:1168.100px;letter-spacing:0.058px">Gradle Console</span>
</div>
<div id="status"><svg class="abs" style="left:5px;top:3.500px" width="14" height="14" viewBox="0 0 14 13"><rect x=".6" y=".6" width="12.800" height="10" fill="#5d6062" stroke="#9a9c9d" stroke-width="1.200"/><path d="M0 12.400h14" stroke="#9a9c9d" stroke-width="1.200"/></svg>
<span class="t st" style="left:31.200px;letter-spacing:-0.127px">Update canceled (16 minutes ago)</span>
<span class="t st" style="left:907.500px;letter-spacing:-0.334px">9:1</span>
<span class="t st" style="left:935.600px;letter-spacing:-0.255px">LF</span>
<span class="t st" style="left:964.400px;letter-spacing:0.489px">UTF-8</span>
<span class="t st" style="left:1015px;letter-spacing:-0.267px">Git: master</span>
<span class="t st" style="left:1085.300px;color:#6d6f70;letter-spacing:-0.018px">Context: &lt;no context&gt;</span>
<svg class="abs" style="left:0;top:0" width="1280" height="19" viewBox="0 776 1280 19">
<g fill="#b0b2b3"><path d="M948.200 785.600l2.300-3 2.300 3zM948.200 787.400l2.300 3 2.300-3z"/><path d="M999 785.600l2.300-3 2.300 3zM999 787.400l2.300 3 2.300-3z"/><path d="M1073.800 785.600l2.300-3 2.300 3zM1073.800 787.400l2.300 3 2.300-3z"/></g>
<path d="M1238.300 786v-1.600a2 2 0 0 1 4 0" fill="none" stroke="#b0b2b3" stroke-width="1.300"/><path fill="#b0b2b3" fill-rule="evenodd" d="M1239.800 785.800h6.400v5.400h-6.400z M1242.400 787.400h1.300v2.200h-1.300z"/>
<g fill="none" stroke="#8f9192" stroke-width="1.100"><path d="M1261.500 782.500c0-2.500 1.500-3.500 4-3.500s4 1 4 3.500"/><path d="M1259.500 783h12"/><path d="M1262 784v3.500c0 2 1.500 3.500 3.500 3.500s3.500-1.500 3.500-3.500v-3.500"/><path d="M1261 793.500c1-1.500 2.500-2 4.500-2s3.500.5 4.500 2"/><circle cx="1264" cy="786" r=".6"/><circle cx="1267" cy="786" r=".6"/></g>
</svg>
</div>
</div>
</body></html>
